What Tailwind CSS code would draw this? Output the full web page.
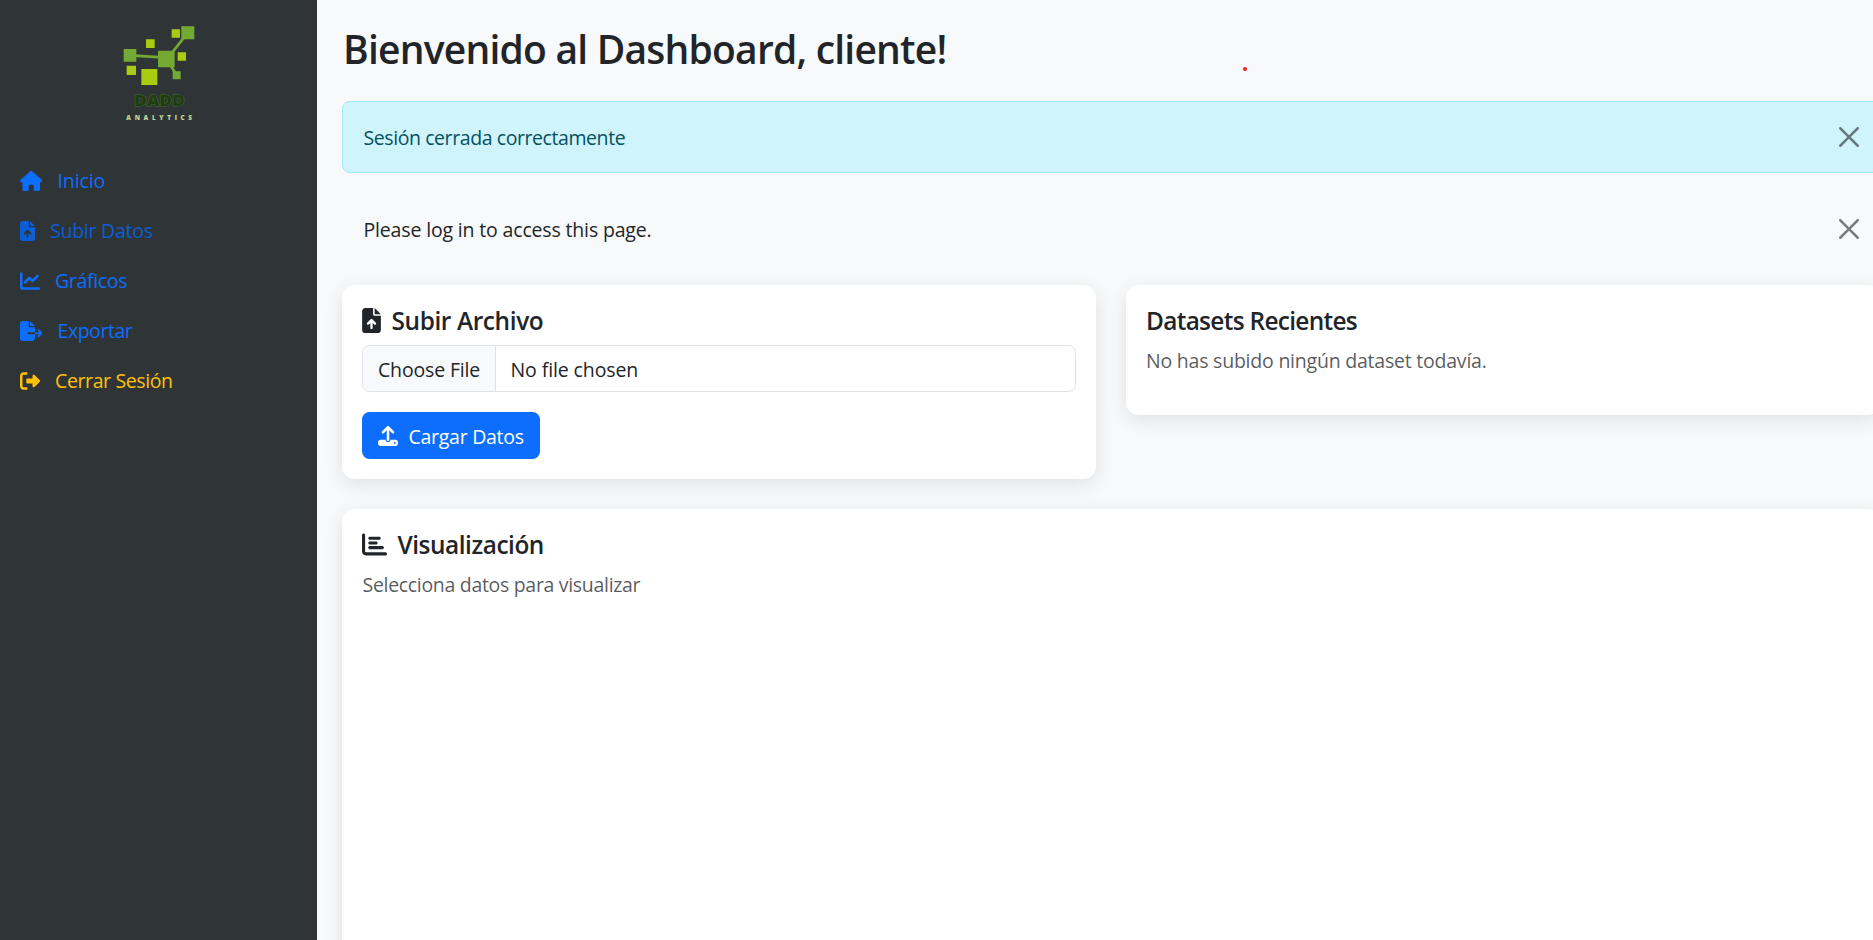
<!DOCTYPE html>
<html lang="es">
<head>
<meta charset="utf-8">
<title>Dashboard</title>
<script src="https://cdn.jsdelivr.net/npm/@tailwindcss/browser@4"></script>
</head>
<body class="h-[940px] overflow-hidden bg-[#f8f9fa] font-['Open_Sans',sans-serif] text-[19.5px] leading-[30px] text-[#212529]">
<div class="flex h-[940px] w-[1905px] overflow-hidden">
  <aside class="flex w-[317px] shrink-0 flex-col bg-[#2f3537] pl-[19.5px]">
    <svg class="mt-[10px] ml-[80.5px] size-[120px]" viewBox="0 0 360 360">
      <g stroke="#74aa34" stroke-width="8"><path d="M90 136 200 143M200 148 264 68M200 148 230 195"/></g>
      <g fill="#74aa34"><path d="M71 117h38v38H71zM244 49h39v39h-39zM174 122h50v50h-50zM218 184h24v24h-24z"/></g>
      <g fill="#a9cb10"><path d="M138 88h26v26h-26zM215 58h25v25h-25zM233 127h25v25h-25zM80 167h28v28H80zM124 177h48v48h-48z"/></g>
      <text x="102" y="289" font-family="Open Sans" font-weight="800" font-size="49" textLength="152" lengthAdjust="spacingAndGlyphs" fill="#1f3d10" stroke="#476b2e" stroke-width="3" paint-order="stroke">DADD</text>
      <text x="79" y="329" font-family="Open Sans" font-weight="800" font-size="19" textLength="197" fill="#c0d890">ANALYTICS</text>
    </svg>
    <nav class="mt-9 flex flex-col gap-5 text-[#0d6efd]">
      <a class="flex h-[30px] items-center gap-[15.5px]"><svg class="h-5 w-[22.5px]" viewBox="0 0 576 512" fill="currentColor"><path d="M575.8 255.5c0 18-15 32.1-32 32.1l-32 0 .7 160.2c0 2.7-.2 5.4-.5 8.1l0 16.2c0 22.1-17.9 40-40 40l-16 0c-1.1 0-2.2 0-3.3-.1c-1.4 .1-2.8 .1-4.2 .1L416 512l-24 0c-22.1 0-40-17.9-40-40l0-24 0-64c0-17.7-14.3-32-32-32l-64 0c-17.7 0-32 14.3-32 32l0 64 0 24c0 22.1-17.9 40-40 40l-24 0-31.9 0c-1.5 0-3-.1-4.5-.2c-1.2 .1-2.4 .2-3.6 .2l-16 0c-22.1 0-40-17.9-40-40l0-112c0-.9 0-1.9 .1-2.8l0-69.7-32 0c-18 0-32-14-32-32.1c0-9 3-17 10-24L266.4 8c7-7 15-8 22-8s15 2 21 7L564.8 231.5c8 7 12 15 11 24z"/></svg><span class="tracking-[-0.12px]">Inicio</span></a>
      <a class="flex h-[30px] items-center gap-[15.5px] text-[#0b5ed7]"><svg class="h-5 w-[15px]" viewBox="0 0 384 512" fill="currentColor"><path d="M64 0C28.700 0 0 28.700 0 64L0 448c0 35.300 28.700 64 64 64l256 0c35.300 0 64-28.700 64-64l0-288-128 0c-17.700 0-32-14.300-32-32L224 0 64 0zM256 0l0 128 128 0L256 0zM216 408c0 13.300-10.700 24-24 24s-24-10.700-24-24l0-102.100-31 31c-9.400 9.400-24.600 9.400-33.900 0s-9.400-24.600 0-33.900l72-72c9.400-9.400 24.600-9.400 33.900 0l72 72c9.400 9.400 9.400 24.600 0 33.900s-24.600 9.400-33.900 0l-31-31L216 408z"/></svg><span class="tracking-[-0.24px]">Subir Datos</span></a>
      <a class="flex h-[30px] items-center gap-[15.5px]"><svg class="size-5" viewBox="0 0 512 512" fill="currentColor"><path d="M64 64c0-17.700-14.300-32-32-32S0 46.300 0 64L0 400c0 44.200 35.800 80 80 80l400 0c17.700 0 32-14.300 32-32s-14.300-32-32-32L80 416c-8.800 0-16-7.200-16-16L64 64zm406.600 86.600c12.500-12.500 12.500-32.800 0-45.300s-32.800-12.500-45.300 0L320 210.700l-57.400-57.400c-12.500-12.500-32.800-12.500-45.300 0l-112 112c-12.500 12.500-12.500 32.800 0 45.300s32.800 12.500 45.300 0L240 221.300l57.400 57.400c12.500 12.500 32.800 12.500 45.300 0l128-128z"/></svg><span class="tracking-[-0.33px]">Gráficos</span></a>
      <a class="flex h-[30px] items-center gap-[15.5px]"><svg class="h-5 w-[22.5px]" viewBox="0 0 576 512" fill="currentColor"><path d="M0 64C0 28.700 28.700 0 64 0L224 0l0 128c0 17.700 14.300 32 32 32l128 0 0 128-168 0c-13.300 0-24 10.700-24 24s10.700 24 24 24l168 0 0 112c0 35.300-28.700 64-64 64L64 512c-35.300 0-64-28.700-64-64L0 64zM384 336l0-48 110.100 0-39-39c-9.400-9.400-9.400-24.600 0-33.900s24.600-9.400 33.900 0l80 80c9.400 9.400 9.400 24.600 0 33.900l-80 80c-9.400 9.400-24.600 9.400-33.900 0s-9.400-24.600 0-33.900l39-39L384 336zm0-208l-128 0L256 0 384 128z"/></svg><span class="tracking-[-0.45px]">Exportar</span></a>
      <a class="flex h-[30px] items-center gap-[15.5px] text-[#ffc107]"><svg class="size-5" viewBox="0 0 512 512" fill="currentColor"><path d="M377.900 105.900L500.700 228.700c7.200 7.200 11.300 17.100 11.300 27.300s-4.100 20.100-11.300 27.300L377.900 406.100c-6.400 6.400-15 9.900-24 9.900c-18.700 0-33.900-15.200-33.900-33.900l0-62.100-128 0c-17.700 0-32-14.300-32-32l0-64c0-17.700 14.300-32 32-32l128 0 0-62.100c0-18.700 15.200-33.900 33.900-33.900c9 0 17.600 3.600 24 9.900zM160 96L96 96c-17.700 0-32 14.300-32 32l0 256c0 17.700 14.300 32 32 32l64 0c17.700 0 32 14.300 32 32s-14.300 32-32 32l-64 0c-53 0-96-43-96-96L0 128C0 75 43 32 96 32l64 0c17.700 0 32 14.300 32 32s-14.300 32-32 32z"/></svg><span class="tracking-[-0.38px]">Cerrar Sesión</span></a>
    </nav>
  </aside>
  <main class="w-[1588px] shrink-0 px-[25px] pt-[25px]">
    <h1 class="h-[48px] pl-px text-[39px] leading-[48px] font-[560] whitespace-nowrap"><span class="tracking-[-0.78px]">Bienvenido al Dashboard, cliente!</span></h1>
    <div class="mt-7 flex h-[72px] items-center justify-between rounded-lg border border-[#9eeaf9] bg-[#cff4fc] pr-[20.500px] pl-[20.500px] text-[#055160]"><span class="pt-[2px] tracking-[-0.42px]">Sesión cerrada correctamente</span>
      <svg class="size-5 fill-black opacity-50" viewBox="0 0 16 16"><path d="M.293.293a1 1 0 0 1 1.414 0L8 6.586 14.293.293a1 1 0 1 1 1.414 1.414L9.414 8l6.293 6.293a1 1 0 0 1-1.414 1.414L8 9.414l-6.293 6.293a1 1 0 0 1-1.414-1.414L6.586 8 .293 1.707a1 1 0 0 1 0-1.414z"/></svg></div>
    <div class="mt-5 flex h-[72px] items-center justify-between pr-[21px] pl-[21.500px]"><span class="pt-[2px] tracking-[-0.160px]">Please log in to access this page.</span>
      <svg class="size-5 fill-black opacity-50" viewBox="0 0 16 16"><path d="M.293.293a1 1 0 0 1 1.414 0L8 6.586 14.293.293a1 1 0 1 1 1.414 1.414L9.414 8l6.293 6.293a1 1 0 0 1-1.414 1.414L8 9.414l-6.293 6.293a1 1 0 0 1-1.414-1.414L6.586 8 .293 1.707a1 1 0 0 1 0-1.414z"/></svg></div>
    <div class="mt-5 flex items-start gap-[30px]">
      <section class="h-[194px] w-[754px] rounded-[12.500px] bg-white p-5 shadow-[0_5px_19px_rgba(0,0,0,0.1)]">
        <h5 class="flex h-[30px] items-center gap-[10.500px] text-[24.400px] font-[560]"><svg class="h-[25px] w-[19px]" viewBox="0 0 384 512" fill="currentColor"><path d="M64 0C28.700 0 0 28.700 0 64L0 448c0 35.300 28.700 64 64 64l256 0c35.300 0 64-28.700 64-64l0-288-128 0c-17.700 0-32-14.300-32-32L224 0 64 0zM256 0l0 128 128 0L256 0zM216 408c0 13.300-10.700 24-24 24s-24-10.700-24-24l0-102.100-31 31c-9.400 9.400-24.600 9.400-33.900 0s-9.400-24.600 0-33.900l72-72c9.400-9.400 24.600-9.400 33.900 0l72 72c9.400 9.400 9.400 24.600 0 33.900s-24.600 9.400-33.900 0l-31-31L216 408z"/></svg><span class="pt-[2px] tracking-[-0.38px]">Subir Archivo</span></h5>
        <div class="mt-[10px] flex h-[47px] items-stretch overflow-hidden rounded-[7.500px] border border-[#dee2e6]">
          <div class="flex w-[133px] items-center border-r border-[#dee2e6] bg-[#f8f9fa] pl-[15px]"><span class="pt-[2px] tracking-[-0.16px]">Choose File</span></div>
          <div class="flex items-center pl-[14.500px]"><span class="pt-[2px] tracking-[-0.1px]">No file chosen</span></div>
        </div>
        <button class="mt-5 flex h-[47px] w-[178px] items-center gap-[10.500px] rounded-[7.500px] bg-[#0d6efd] pl-4 text-white"><svg class="size-5" viewBox="0 0 512 512" fill="currentColor"><path d="M288 109.300L288 352c0 17.700-14.300 32-32 32s-32-14.300-32-32l0-242.700-73.400 73.400c-12.500 12.500-32.800 12.500-45.300 0s-12.500-32.800 0-45.300l128-128c12.500-12.500 32.800-12.500 45.300 0l128 128c12.500 12.500 12.500 32.800 0 45.300s-32.800 12.500-45.300 0L288 109.300zM64 352l128 0c0 35.300 28.700 64 64 64s64-28.700 64-64l128 0c35.300 0 64 28.700 64 64l0 32c0 35.300-28.700 64-64 64L64 512c-35.300 0-64-28.700-64-64l0-32c0-35.300 28.700-64 64-64zM432 456a24 24 0 1 0 0-48 24 24 0 1 0 0 48z"/></svg><span class="pt-[2px] tracking-[-0.27px]">Cargar Datos</span></button>
      </section>
      <section class="h-[130px] w-[754px] rounded-[12.500px] bg-white p-5 shadow-[0_5px_19px_rgba(0,0,0,0.1)]">
        <h5 class="flex h-[30px] items-center text-[24.400px] font-[560]"><span class="pt-[2px] tracking-[-0.680px]">Datasets Recientes</span></h5>
        <p class="mt-[10px] flex h-[30px] items-center text-[#212529]/75"><span class="pt-[2px] tracking-[-0.220px]">No has subido ningún dataset todavía.</span></p>
      </section>
    </div>
    <section class="mt-[30px] h-[600px] rounded-[12.500px] bg-white p-5 shadow-[0_5px_19px_rgba(0,0,0,0.1)]">
      <h5 class="flex h-[30px] items-center gap-[10.500px] text-[24.400px] font-[560]"><svg class="size-[25px]" viewBox="0 0 512 512" fill="currentColor"><path d="M32 32c17.700 0 32 14.300 32 32l0 336c0 8.800 7.200 16 16 16l400 0c17.700 0 32 14.300 32 32s-14.300 32-32 32L80 480c-44.200 0-80-35.800-80-80L0 64C0 46.300 14.300 32 32 32zm96 96c0-17.700 14.300-32 32-32l192 0c17.700 0 32 14.300 32 32s-14.300 32-32 32l-192 0c-17.700 0-32-14.300-32-32zm32 64l128 0c17.700 0 32 14.300 32 32s-14.300 32-32 32l-128 0c-17.700 0-32-14.300-32-32s14.300-32 32-32zm0 96l256 0c17.700 0 32 14.300 32 32s-14.300 32-32 32l-256 0c-17.700 0-32-14.300-32-32s14.300-32 32-32z"/></svg><span class="pt-[2px] tracking-[-0.45px]">Visualización</span></h5>
      <p class="mt-[10px] flex h-[30px] items-center text-[#212529]/75"><span class="pt-[2px] pl-[0.500px] tracking-[-0.31px]">Selecciona datos para visualizar</span></p>
    </section>
  </main>
</div>
<div class="absolute top-[67px] left-[1242.5px] size-1 rounded-full bg-[#ed1c24]"></div>
</body>
</html>
